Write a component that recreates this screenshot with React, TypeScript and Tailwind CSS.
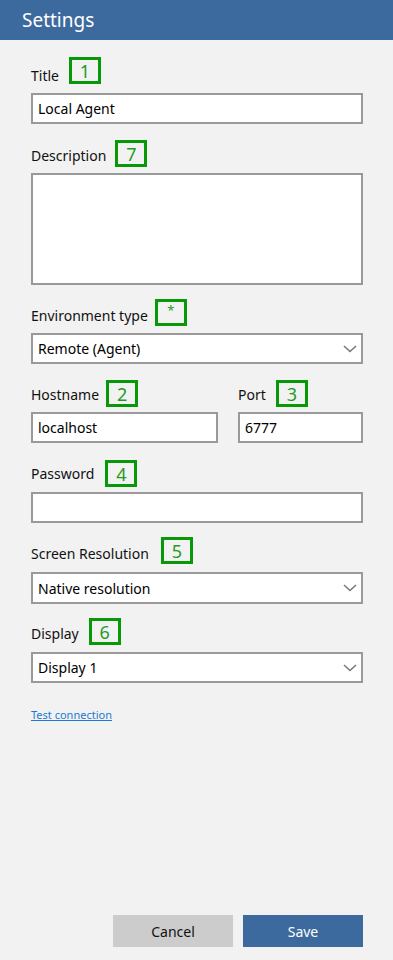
import React from 'react';

const font = { fontFamily: '"Noto Sans", "Open Sans", Arial, sans-serif' };

// green numbered marker next to a label
const Badge: React.FC<{ n: string; className: string }> = ({ n, className }) => (
  <span
    className={`inline-flex justify-center w-[32px] h-[27px] border-[3px] border-[#089908] ${n === '*' ? 'text-[13px]' : 'text-[18px]'} leading-none pt-[2px] text-[#1f9c1f] shrink-0 ${className}`}
  >
    {n}
  </span>
);

const Label: React.FC<{ text: string; n: string; badge: string }> = ({ text, n, badge }) => (
  <div className="flex items-start h-5 text-[14px] leading-5 text-[#111]">
    <span>{text}</span>
    <Badge n={n} className={badge} />
  </div>
);

const inputClass =
  'w-full h-[31px] bg-white border-2 border-[#999] px-[5px] text-[14px] text-black outline-none';

const Chevron = () => (
  <svg width="14" height="8" viewBox="0 0 14 8" className="shrink-0">
    <polyline points="1,1 7,6.5 13,1" fill="none" stroke="#7a7a7a" strokeWidth="1.6" />
  </svg>
);

const Select: React.FC<{ value: string; tall?: boolean }> = ({ value, tall }) => (
  <div
    className={`flex items-center justify-between w-full ${tall ? 'h-[32px]' : 'h-[31px]'} bg-white border-2 border-[#999] pl-[5px] pr-[4px] text-[14px] text-black`}
  >
    <span>{value}</span>
    <Chevron />
  </div>
);

export default function App() {
  return (
    <div className="w-[393px] h-[960px] bg-[#f2f2f2] flex flex-col" style={font}>
      <header className="h-10 bg-[#3d6a9e] flex items-center pl-[22px] shrink-0">
        <h1 className="text-[19px] text-white font-normal leading-none">Settings</h1>
      </header>

      <div className="flex-1 flex flex-col pl-[31px] pr-[30px] pt-[26px] pb-[13px]">
        <div>
          <Label text="Title" n="1" badge="ml-[10px] -mt-[9px]" />
          <input className={`${inputClass} mt-[7px]`} defaultValue="Local Agent" />
        </div>

        <div className="mt-[22px]">
          <Label text="Description" n="7" badge="ml-[9px] -mt-[6px]" />
          <textarea className="block w-full h-[112px] mt-[7px] bg-white border-2 border-[#999] resize-none outline-none" />
        </div>

        <div className="mt-[21px]">
          <Label text="Environment type" n="*" badge="ml-[7px] -mt-[7px]" />
          <div className="mt-[7px]">
            <Select value="Remote (Agent)" />
          </div>
        </div>

        <div className="mt-[21px] flex gap-[20px]">
          <div className="w-[187px]">
            <Label text="Hostname" n="2" badge="ml-[7px] -mt-[5px]" />
            <input className={`${inputClass} mt-[7px]`} defaultValue="localhost" />
          </div>
          <div className="flex-1">
            <Label text="Port" n="3" badge="ml-[10px] -mt-[5px]" />
            <input className={`${inputClass} mt-[7px]`} defaultValue="6777" />
          </div>
        </div>

        <div className="mt-[21px]">
          <Label text="Password" n="4" badge="ml-[11px] -mt-[4px]" />
          <input type="password" className={`${inputClass} mt-[8px]`} />
        </div>

        <div className="mt-[21px]">
          <Label text="Screen Resolution" n="5" badge="ml-[12px] -mt-[7px]" />
          <div className="mt-[8px]">
            <Select value="Native resolution" tall />
          </div>
        </div>

        <div className="mt-[20px]">
          <Label text="Display" n="6" badge="ml-[10px] -mt-[6px]" />
          <div className="mt-[8px]">
            <Select value="Display 1" />
          </div>
        </div>

        <a href="#" className="mt-[24px] self-start text-[11px] leading-4 text-[#1a7ad4] underline">
          Test connection
        </a>

        <div className="mt-auto flex justify-end gap-[10px]">
          <button className="w-[120px] h-[32px] bg-[#cccccc] text-[14px] text-[#111]">Cancel</button>
          <button className="w-[120px] h-[32px] bg-[#3d6a9e] text-[14px] text-white">Save</button>
        </div>
      </div>
    </div>
  );
}
